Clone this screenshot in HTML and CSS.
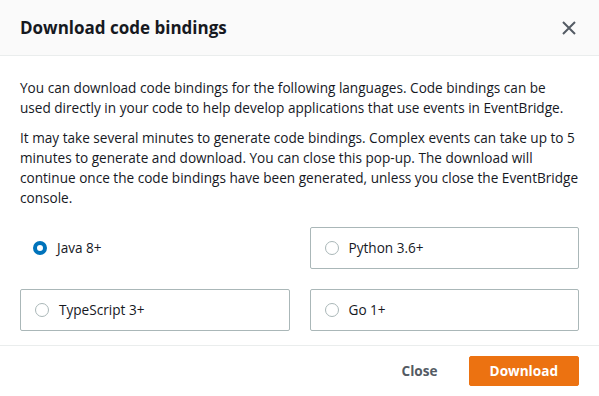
FILE: index.html
```html
<!DOCTYPE html>
<html lang="en">
  <head>
    <meta charset="UTF-8" />
    <title>Download code bindings</title>
    <link rel="stylesheet" href="styles.css">
  </head>
  <body>
    <div class="modal">
      <div class="modal-header">
        <h2>Download code bindings</h2>
        <button class="dismiss" aria-label="Close">
          <svg width="16" height="16" viewBox="0 0 16 16">
            <path d="M2 2l12 12M14 2L2 14" stroke="#545b64" stroke-width="2" fill="none" />
          </svg>
        </button>
      </div>
      <div class="modal-body">
        <p>You can download code bindings for the following languages. Code bindings can be used directly in your code to help develop applications that use events in EventBridge.</p>
        <p>It may take several minutes to generate code bindings. Complex events can take up to 5 minutes to generate and download. You can close this pop-up. The download will continue once the code bindings have been generated, unless you close the EventBridge console.</p>
        <div class="tiles">
          <label class="tile selected"><span class="radio"></span>Java 8+</label>
          <label class="tile"><span class="radio"></span>Python 3.6+</label>
          <label class="tile"><span class="radio"></span>TypeScript 3+</label>
          <label class="tile"><span class="radio"></span>Go 1+</label>
        </div>
      </div>
      <div class="modal-footer">
        <button class="btn-link">Close</button>
        <button class="btn-primary">Download</button>
      </div>
    </div>
  </body>
</html>
```
FILE: styles.css
```css
body {
  margin: 0;
  font-family: "Open Sans", "Liberation Sans", sans-serif;
  font-size: 13.6px;
  line-height: 20px;
  color: #16191f;
  background: #fff;
}
.modal {
  width: 599px;
}
.modal-header {
  display: flex;
  align-items: center;
  justify-content: space-between;
  height: 55px;
  padding: 0 20px;
  background: #fafafa;
  border-bottom: 1px solid #eaeded;
}
.modal-header h2 {
  margin: 0;
  font-size: 17px;
  font-weight: bold;
}
.dismiss {
  background: none;
  border: none;
  padding: 0;
  margin-right: 2px;
  display: flex;
  cursor: pointer;
}
.modal-body {
  padding: 22px 20px 14px;
}
.modal-body p {
  margin: 0 0 10px;
}
.tiles {
  display: grid;
  grid-template-columns: 1fr 1fr;
  gap: 20px;
  margin-top: 19px;
}
.tile {
  display: flex;
  align-items: center;
  gap: 10px;
  padding: 10px 14px;
  border: 1px solid #aab7b8;
  border-radius: 2px;
}
.tile.selected {
  border-color: transparent;
  padding-left: 12px;
}
.radio {
  width: 14px;
  height: 14px;
  border: 1px solid #aab7b8;
  border-radius: 50%;
  box-sizing: border-box;
}
.selected .radio {
  border: 4px solid #0073bb;
}
.modal-footer {
  display: flex;
  justify-content: flex-end;
  gap: 10px;
  padding: 10px 20px;
  border-top: 1px solid #eaeded;
}
.modal-footer button {
  font: inherit;
  font-weight: bold;
  height: 30px;
  padding: 0 20px;
  border-radius: 2px;
  cursor: pointer;
}
.btn-link {
  background: none;
  border: 1px solid transparent;
  color: #545b64;
}
.btn-primary {
  background: #ec7211;
  border: 1px solid #ec7211;
  color: #fff;
}
```
